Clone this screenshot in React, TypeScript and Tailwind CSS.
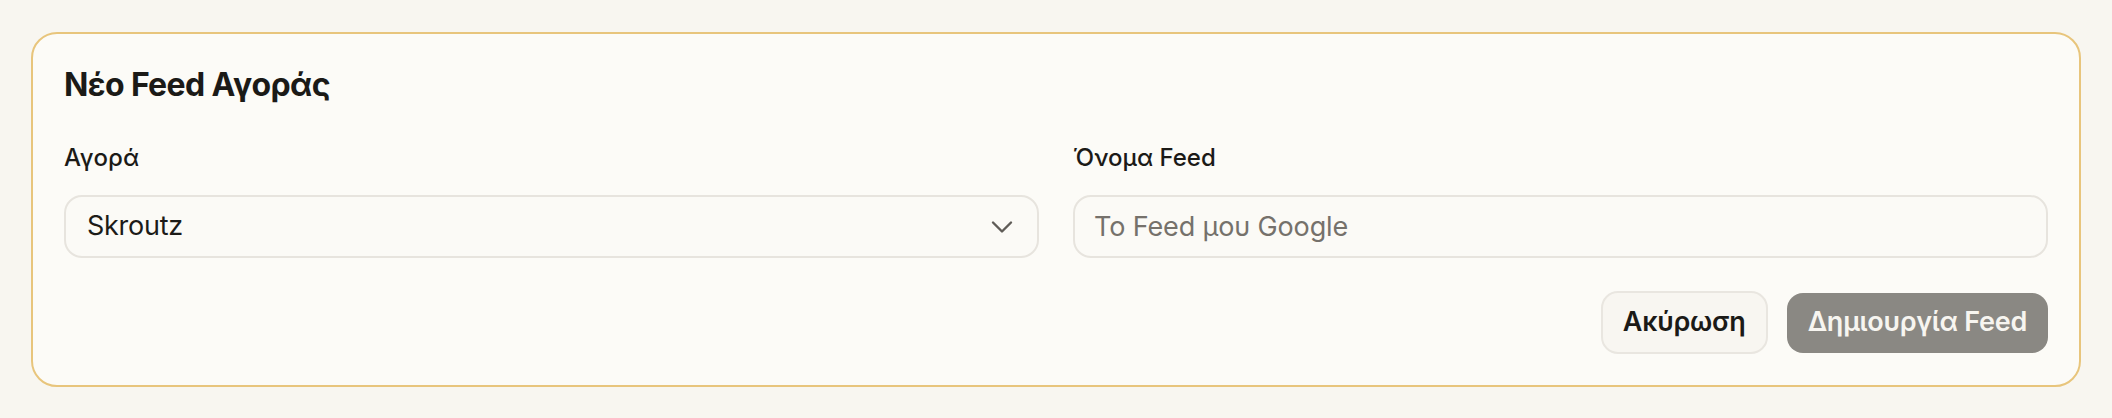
import React from "react";
import { ChevronDown } from "lucide-react";

export default function App() {
  return (
    <div
      className="min-h-[418px] bg-[#f8f6f0] px-[31px] pt-[32px] pb-[31px]"
      style={{ fontFamily: "Inter, 'Noto Sans', sans-serif" }}
    >
      <div className="rounded-[26px] border-2 border-[#e8c57c] bg-[#fcfbf7] px-[31px] pt-[31px] pb-[31px]">
        <h2 className="text-[32px] leading-[40px] font-bold text-[#1b1a17] tracking-[-0.02em]">
          Νέο Feed Αγοράς
        </h2>
        <div className="mt-[37px] grid grid-cols-2 gap-[34px]">
          <div className="flex flex-col">
            <label className="text-[24px] leading-[32px] font-medium text-[#1b1a17]">
              Αγορά
            </label>
            <div className="mt-[21px] flex h-[63px] items-center justify-between rounded-[18px] border-2 border-[#e7e4de] bg-[#fbfaf6] pl-[21px] pr-[17px]">
              <span className="text-[27px] text-[#1c1b18] tracking-[-0.01em]">Skroutz</span>
              <ChevronDown size={36} strokeWidth={1.6} className="text-[#5f5c57]" />
            </div>
          </div>
          <div className="flex flex-col">
            <label className="text-[24px] leading-[32px] font-medium text-[#1b1a17]">
              Όνομα Feed
            </label>
            <input
              className="mt-[21px] h-[63px] rounded-[18px] border-2 border-[#e7e4de] bg-[#fbfaf6] px-[19px] text-[27px] text-[#1c1b18] tracking-[-0.005em] outline-none placeholder:text-[#75716b]"
              placeholder="Το Feed μου Google"
            />
          </div>
        </div>
        <div className="mt-[33px] flex items-center justify-end gap-[19px]">
          <button className="h-[63px] rounded-[17px] border-2 border-[#e9e6e0] bg-[#f8f6f1] px-[20px] text-[27px] font-semibold text-[#1b1a17] tracking-[-0.01em]">
            Ακύρωση
          </button>
          <button className="h-[60px] rounded-[16px] bg-[#8a8883] px-[21px] text-[27px] font-semibold text-[#f7f5f0] tracking-[-0.01em]">
            Δημιουργία Feed
          </button>
        </div>
      </div>
    </div>
  );
}
